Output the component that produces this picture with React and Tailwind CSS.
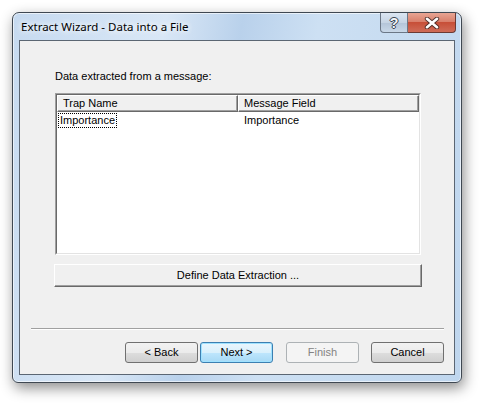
import React from "react";

const ui = { fontFamily: '"Liberation Sans", Arial, sans-serif' };

const WinButton = ({ children, variant = "normal", className = "" }) => {
    const styles = {
        normal:
            "border-[#707070] bg-[linear-gradient(#f2f2f2_0%,#ebebeb_50%,#dddddd_51%,#cfcfcf_100%)] text-black",
        default:
            "border-[#3c7fb1] bg-[linear-gradient(#eaf6fd_0%,#d9f0fc_50%,#bee6fd_51%,#a7d9f5_100%)] text-black shadow-[inset_0_0_0_1px_#9fe2ff]",
        disabled: "border-[#adb2b5] bg-[#f4f4f4] text-[#838383]",
    };
    return (
        <div
            className={`h-[21px] flex items-center justify-center rounded-[3px] border text-[11px] ${styles[variant]} ${className}`}
            style={ui}
        >
            <span>{children}</span>
        </div>
    );
};

export default function App() {
    return (
        <div className="w-[483px] h-[403px] bg-white pl-[12px] pt-[12px] overflow-hidden">
            {/* window */}
            <div className="w-[450px] h-[371px] flex flex-col rounded-t-[7px] rounded-b-[6px] border border-[#3f4852] bg-[linear-gradient(100deg,#c6daf0_0%,#d9e7f6_30%,#b9d1eb_45%,#cde0f3_60%,#bfd6ee_100%)] shadow-[2px_5px_14px_rgba(0,0,0,0.45),inset_0_0_0_1px_rgba(255,255,255,0.6)]">
                {/* title bar */}
                <div className="h-[27px] flex items-start shrink-0">
                    <div
                        className="pl-[8px] pt-[6px] text-[11.5px] leading-[16px] text-black [text-shadow:0_0_6px_#fff,0_0_6px_#fff]"
                        style={{ fontFamily: '"Noto Sans", "Open Sans", sans-serif' }}
                    >
                        Extract Wizard - Data into a File
                    </div>
                    <div className="ml-auto mr-[5px] flex h-[20px]">
                        <div className="w-[28px] h-[20px] flex items-center justify-center rounded-bl-[4px] border border-t-0 border-[#6b7786] bg-[linear-gradient(#dce6f2_0%,#c6d4e4_50%,#b3c4d8_51%,#c9d8e8_100%)]">
                            <span
                                className="text-[14px] font-bold leading-none text-[#f4f6f9] [text-shadow:0_0_1px_#3b4654,1px_0_0_#3b4654,-1px_0_0_#3b4654,0_1px_0_#3b4654,0_-1px_0_#3b4654]"
                                style={ui}
                            >
                                ?
                            </span>
                        </div>
                        <div className="w-[48px] h-[20px] flex items-center justify-center rounded-br-[4px] border border-l-0 border-t-0 border-[#6b3a33] bg-[linear-gradient(#e8a593_0%,#d9806c_45%,#c74f38_50%,#cf6c58_100%)]">
                            <svg width="16" height="12" viewBox="0 0 16 12">
                                <path
                                    d="M3 1.8 L13 10.2 M13 1.8 L3 10.2"
                                    stroke="#3a2320"
                                    strokeWidth="4.4"
                                    strokeLinecap="round"
                                    fill="none"
                                    opacity="0.85"
                                />
                                <path
                                    d="M3 1.8 L13 10.2 M13 1.8 L3 10.2"
                                    stroke="#ffffff"
                                    strokeWidth="2.6"
                                    strokeLinecap="round"
                                    fill="none"
                                />
                            </svg>
                        </div>
                    </div>
                </div>

                {/* client area */}
                <div className="mx-[6px] mb-[7px] flex-1 border border-[#5b6673] bg-[#f0f0f0] flex flex-col" style={ui}>
                    <div className="ml-[35px] mt-[29px] text-[11px] leading-[13px] text-black">
                        Data extracted from a message:
                    </div>

                    {/* list view */}
                    <div className="ml-[35px] mt-[10px] w-[366px] h-[162px] border border-t-[#a0a0a0] border-l-[#a0a0a0] border-b-white border-r-white">
                        <div className="w-full h-full border border-t-[#696969] border-l-[#696969] border-b-[#e3e3e3] border-r-[#e3e3e3] bg-white flex flex-col">
                            <div className="flex h-[17px] shrink-0 text-[11px] leading-[13px]">
                                <div className="w-[181px] border border-t-white border-l-white border-b-[#696969] border-r-[#696969] bg-[#f0f0f0] shadow-[inset_-1px_-1px_0_#a0a0a0] pl-[5px] pt-[1px]">
                                    Trap Name
                                </div>
                                <div className="flex-1 border border-t-white border-l-white border-b-[#696969] border-r-[#696969] bg-[#f0f0f0] shadow-[inset_-1px_-1px_0_#a0a0a0] pl-[5px] pt-[1px]">
                                    Message Field
                                </div>
                            </div>
                            <div className="flex h-[15px] mt-[1px] text-[11px] leading-[13px]">
                                <div className="w-[181px] pl-[1px]">
                                    <span className="inline-block border border-dotted border-black px-[1px]">Importance</span>
                                </div>
                                <div className="flex-1 pl-[6px] pt-[1px]">Importance</div>
                            </div>
                        </div>
                    </div>

                    {/* define button */}
                    <div className="ml-[34px] mt-[9px] w-[368px] h-[23px] border border-t-white border-l-white border-b-[#696969] border-r-[#696969] shadow-[inset_-1px_-1px_0_#a0a0a0] bg-[#f0f0f0] flex items-center justify-center text-[11px]">
                        Define Data Extraction ...
                    </div>

                    {/* separator */}
                    <div className="ml-[11px] mt-[41px] w-[413px] h-[2px] border-t border-[#a0a0a0] border-b border-b-white" />

                    {/* wizard buttons */}
                    <div className="flex mt-[12px] ml-[105px]">
                        <WinButton className="w-[73px]">&lt; Back</WinButton>
                        <WinButton variant="default" className="w-[73px] ml-[2px]">Next &gt;</WinButton>
                        <WinButton variant="disabled" className="w-[73px] ml-[13px]">Finish</WinButton>
                        <WinButton className="w-[73px] ml-[12px]">Cancel</WinButton>
                    </div>
                </div>
            </div>
        </div>
    );
}
